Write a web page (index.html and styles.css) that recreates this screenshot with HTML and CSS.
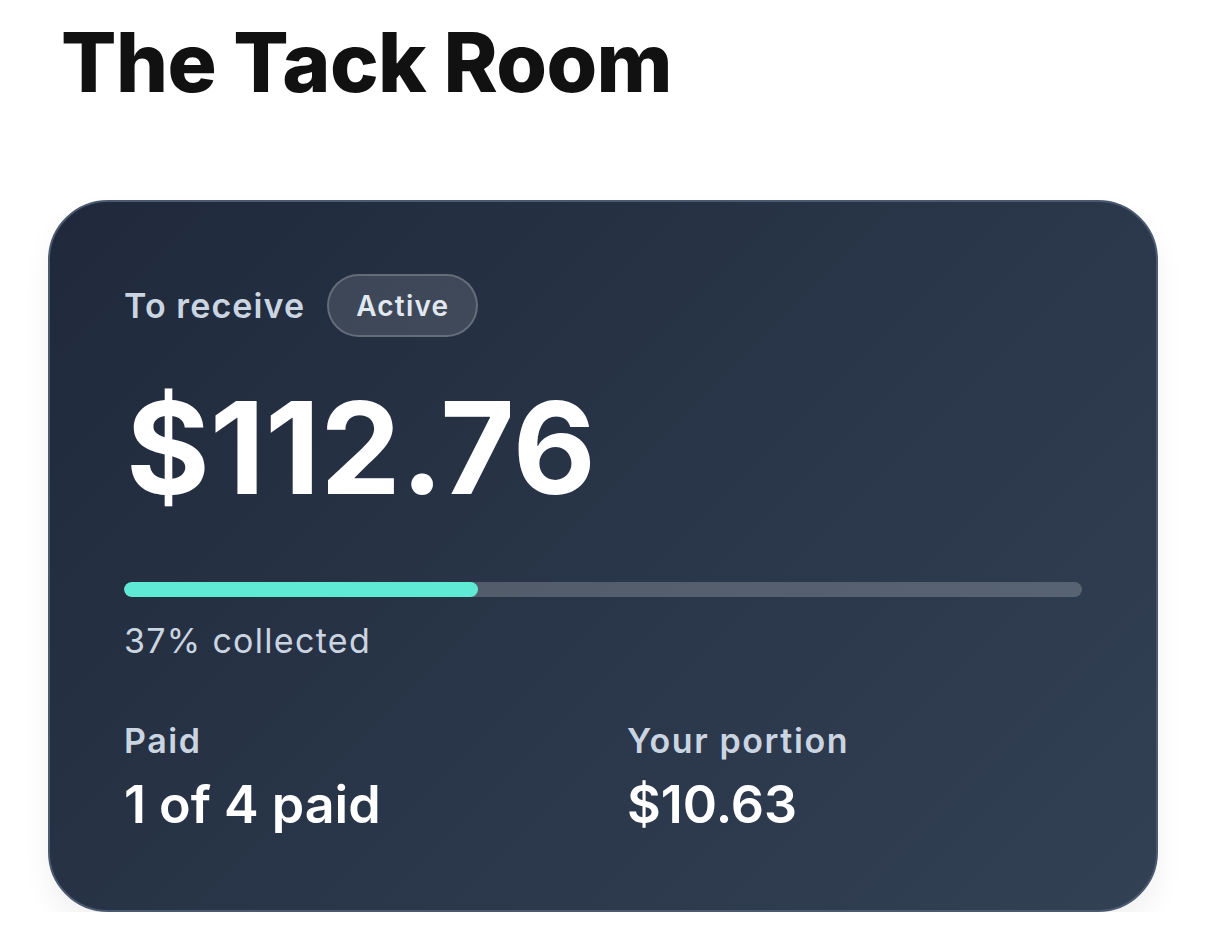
FILE: index.html
```html
<!DOCTYPE html>
<html lang="en">
<head>
  <meta charset="UTF-8"/>
  <meta name="viewport" content="width=device-width, initial-scale=1.0"/>
  <title>The Tack Room</title>
  <link rel="stylesheet" href="styles.css">
</head>
<body>
  <h1 class="page-title">The Tack Room</h1>

  <div class="card">
    <div class="card-head">
      <span class="card-label">To receive</span>
      <span class="badge">Active</span>
    </div>
    <div class="amount">$112.76</div>

    <div class="progress">
      <div class="progress-fill" style="width: 37%"></div>
    </div>
    <div class="progress-text">37% collected</div>

    <div class="stats">
      <div class="stat">
        <div class="stat-label">Paid</div>
        <div class="stat-value">1 of 4 paid</div>
      </div>
      <div class="stat">
        <div class="stat-label">Your portion</div>
        <div class="stat-value">$10.63</div>
      </div>
    </div>
  </div>
</body>
</html>
```

FILE: styles.css
```css
:root {
  --card-from: #1f293b;
  --card-to: #334155;
  --muted: #cbd5e1;
  --accent: #5eead4;
}
body {
  margin: 0;
  padding: 0 48px;
  font-family: Inter, "Noto Sans", sans-serif;
  background: #fff;
  color: #111;
}
.page-title {
  margin: 0;
  padding: 22px 0 0 13px;
  font-size: 82px;
  font-weight: 800;
  letter-spacing: -0.6px;
  line-height: 1;
  color: #111;
}
.card {
  margin-top: 96px;
  padding: 72px 74px 77px;
  border: 2px solid #4b5a70;
  border-radius: 60px;
  background: linear-gradient(135deg, var(--card-from), var(--card-to));
  box-shadow: 0 16px 30px rgba(15, 23, 42, 0.06);
  color: #fff;
}
.card-head {
  display: flex;
  align-items: center;
  gap: 22px;
}
.card-label {
  font-size: 34px;
  font-weight: 600;
  letter-spacing: 1.1px;
  color: var(--muted);
}
.badge {
  display: inline-flex;
  align-items: center;
  height: 63px;
  box-sizing: border-box;
  padding: 0 27px;
  border: 2px solid rgba(255, 255, 255, 0.2);
  border-radius: 999px;
  background: rgba(255, 255, 255, 0.12);
  font-size: 28px;
  font-weight: 600;
  letter-spacing: 1.2px;
  color: #e2e8f0;
}
.amount {
  margin-top: 47px;
  font-size: 128px;
  font-weight: 700;
  line-height: 1;
  letter-spacing: 0;
  padding-left: 2px;
}
.progress {
  margin-top: 70px;
  height: 15px;
  border-radius: 999px;
  background: rgba(255, 255, 255, 0.2);
  overflow: hidden;
}
.progress-fill {
  height: 100%;
  border-radius: 999px;
  background: var(--accent);
}
.progress-text {
  margin-top: 23px;
  font-size: 34px;
  letter-spacing: 1.3px;
  color: var(--muted);
}
.stats {
  display: grid;
  grid-template-columns: 1fr 1fr;
  gap: 48px;
  margin-top: 59px;
}
.stat-label {
  font-size: 34px;
  font-weight: 600;
  letter-spacing: 1.6px;
  color: var(--muted);
}
.stat-value {
  margin-top: 15px;
  font-size: 52px;
  font-weight: 600;
  line-height: 1.1;
}
```
